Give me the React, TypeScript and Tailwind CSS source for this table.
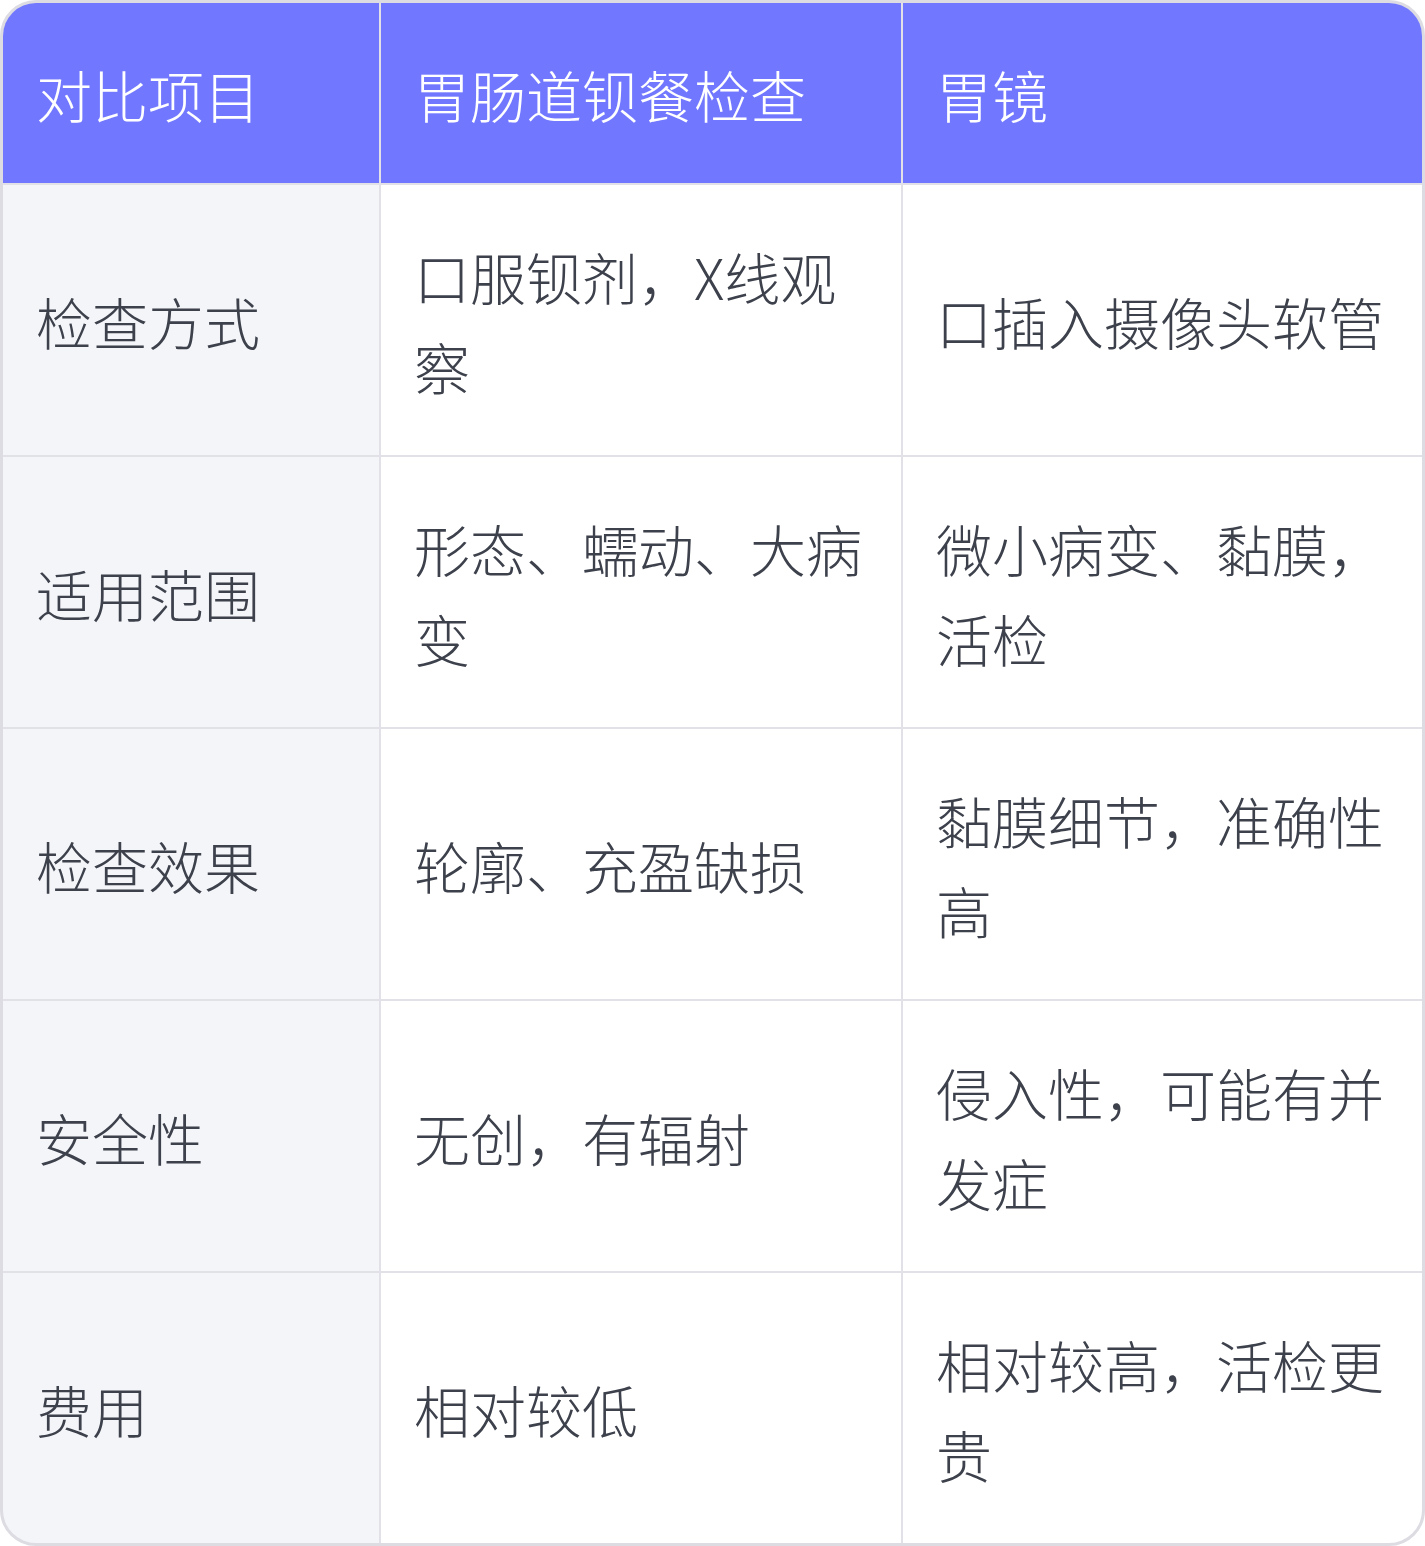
const header = ["对比项目", "胃肠道钡餐检查", "胃镜"];

const rows: [string, string, string][] = [
  ["检查方式", "口服钡剂，X线观察", "口插入摄像头软管"],
  ["适用范围", "形态、蠕动、大病变", "微小病变、黏膜，活检"],
  ["检查效果", "轮廓、充盈缺损", "黏膜细节，准确性高"],
  ["安全性", "无创，有辐射", "侵入性，可能有并发症"],
  ["费用", "相对较低", "相对较高，活检更贵"],
];

const App = () => {
  return (
    <div className="w-[1425px] h-[1546px] bg-white font-['Noto_Sans_CJK_SC',sans-serif] font-light">
      <div className="grid grid-cols-[376px_520px_1fr] gap-[2px] bg-[#e1e1e7] border-[3px] border-[#dcdce2] rounded-[36px] overflow-hidden text-[56px] leading-[90px]">
        {header.map((h) => (
          <div
            key={h}
            className="bg-[#7177ff] text-white pl-[33px] pr-[35px] pt-[46px] pb-[44px] flex items-center"
          >
            {h}
          </div>
        ))}
        {rows.map((r) =>
          r.map((cell, i) => (
            <div
              key={r[0] + i}
              className={`pl-[33px] pr-[35px] pt-[46px] pb-[44px] flex items-center text-[#3d414c] ${
                i === 0 ? "bg-[#f4f5f9]" : "bg-white"
              }`}
            >
              <span>{cell}</span>
            </div>
          ))
        )}
      </div>
    </div>
  );
};

export default App;
